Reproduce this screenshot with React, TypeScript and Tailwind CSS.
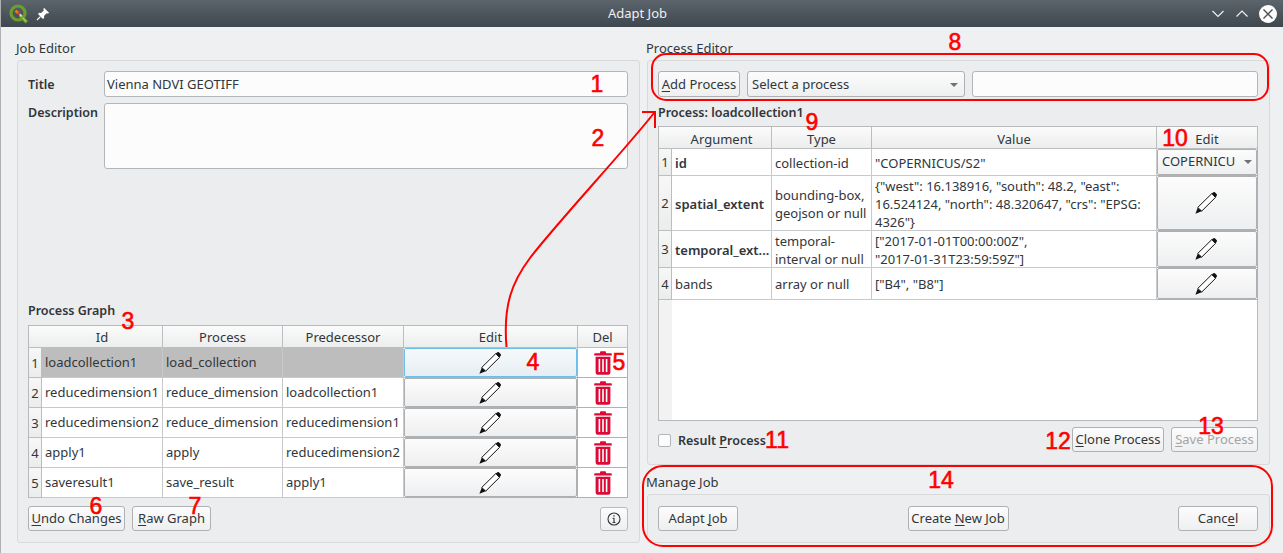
import type { ReactNode } from "react";

const FONT = "font-['Noto_Sans',sans-serif]";

const PencilIcon = () => (
  <svg width="24" height="24" viewBox="0 0 24 24" className="mr-[2px] shrink-0">
    <path d="M3.8 16.4 17.8 2.6 21.5 6.4 7.6 20.2Z" fill="#fff" stroke="#111" strokeWidth="1" strokeLinejoin="round" />
    <path d="M3.8 16.4 1.4 22.8 7.6 20.2 7 18.9 5.4 18.3Z" fill="#111" />
    <path d="M17.8 2.6 19.4 1.2Q20.2.8 20.9 1.3L22.8 3.2Q23.3 4 22.7 4.8L21.5 6.4Z" fill="#111" />
  </svg>
);

const TrashIcon = () => (
  <svg width="18" height="24" viewBox="0 0 18 24" className="shrink-0">
    <path d="M6 2.2V1.2Q6 .3 7 .3H11Q12 .3 12 1.2V2.2H17Q17.8 2.2 17.8 3V4.6H.2V3Q.2 2.2 1 2.2Z" fill="#dc0a36" />
    <path
      fillRule="evenodd"
      d="M1.6 5.8H16.4V21.6Q16.4 23.8 14.2 23.8H3.8Q1.6 23.8 1.6 21.6ZM4.6 8V21H6.2V8ZM8.2 8V21H9.8V8ZM11.8 8V21H13.4V8Z"
      fill="#dc0a36"
    />
  </svg>
);

const QgisLogo = () => (
  <svg width="20" height="20" viewBox="0 0 20 20">
    <circle cx="9" cy="9" r="7" fill="none" stroke="#6b9f2a" strokeWidth="3.2" />
    <path d="M11 11 17.8 18.4" stroke="#6b9f2a" strokeWidth="3.6" />
    <path d="M13.5 13.5 17 17.5" stroke="#a7c957" strokeWidth="1.4" />
    <path d="M6.8 7 10 9.6 12.6 12.6" stroke="#e8e8e0" strokeWidth="1.6" fill="none" />
    <path d="M6.6 6.8 9.4 9.2" stroke="#e8791e" strokeWidth="2.8" />
    <path d="M8.8 8.8 10.6 10.4" stroke="#e0342a" strokeWidth="2" />
  </svg>
);

const PinIcon = () => (
  <svg width="14" height="14" viewBox="0 0 14 14">
    <path d="M8 .8 13.2 6 11.8 6.6 10.6 6.2 8 9 8.2 11 7 12 2 7 3 5.8 5 6 7.8 3.4 7.4 2.2Z" fill="#fff" />
    <path d="M4.4 9.6 1 13" stroke="#fff" strokeWidth="1.2" />
  </svg>
);

const Btn = ({ children, className = "", disabled = false }: { children: ReactNode; className?: string; disabled?: boolean }) => (
  <button
    className={`h-[25px] shrink-0 rounded-[3px] border border-[#b0b1b2] bg-gradient-to-b from-[#fcfcfc] to-[#eeeff0] text-[13px] leading-none ${
      disabled ? "from-[#eff0f1] to-[#e6e7e8] text-[#a3a5a7]" : "text-[#31363b]"
    } ${className}`}
  >
    {children}
  </button>
);

const U = ({ children }: { children: ReactNode }) => <span className="underline underline-offset-2">{children}</span>;

const HeaderCell = ({ children, className = "" }: { children?: ReactNode; className?: string }) => (
  <div className={`flex items-center justify-center border-r border-b border-[#bcbdbe] bg-gradient-to-b from-[#fbfbfb] to-[#eceded] text-[13px] text-[#31363b] ${className}`}>
    {children}
  </div>
);

const RowNum = ({ n }: { n: number }) => (
  <div className="flex items-center justify-center border-r border-b border-[#bcbdbe] bg-gradient-to-b from-[#f7f7f7] to-[#ebecec] pt-[2px] text-[13px] text-[#31363b]">{n}</div>
);

const CellBtn = ({ children, active = false }: { children: ReactNode; active?: boolean }) => (
  <div className="border-r border-b border-[#b0b1b2]">
    <div
      className={`flex h-full items-center justify-center rounded-[2px] border bg-gradient-to-b ${
        active ? "border-[#6ebde8] from-[#f6f9fb] to-[#e6eef3]" : "border-[#aeafb0] from-[#fcfcfc] to-[#eeeff0]"
      }`}
    >
      {children}
    </div>
  </div>
);

const Cell = ({ children, className = "" }: { children?: ReactNode; className?: string }) => (
  <div className={`flex items-center overflow-hidden whitespace-nowrap border-r border-b border-[#c8c9ca] pl-[3px] text-[13px] leading-[18px] text-[#31363b] ${className}`}>
    {children}
  </div>
);

const graphRows = [
  ["loadcollection1", "load_collection", ""],
  ["reducedimension1", "reduce_dimension", "loadcollection1"],
  ["reducedimension2", "reduce_dimension", "reducedimension1"],
  ["apply1", "apply", "reducedimension2"],
  ["saveresult1", "save_result", "apply1"],
];

const ProcessGraphTable = () => (
  <div className="grid h-[173px] w-[600px] grid-cols-[13px_121px_120px_121px_174px_50px] grid-rows-[22px_repeat(5,30px)] border-t border-l border-[#b8b9ba] bg-white">
    <HeaderCell className="border-r-0" />
    <HeaderCell className="pt-[2px]">Id</HeaderCell>
    <HeaderCell className="pt-[2px]">Process</HeaderCell>
    <HeaderCell className="pt-[2px]">Predecessor</HeaderCell>
    <HeaderCell className="pt-[2px]">Edit</HeaderCell>
    <HeaderCell className="pt-[2px]">Del</HeaderCell>
    {graphRows.map((r, i) => (
      <div key={r[0]} className="contents">
        <RowNum n={i + 1} />
        {r.map((c, j) => (
          <Cell key={j} className={i === 0 ? "bg-[#bdbdbd] pb-px" : "pb-px"}>
            {c}
          </Cell>
        ))}
        <CellBtn active={i === 0}>
          <PencilIcon />
        </CellBtn>
        <div className="flex items-center justify-center border-r border-b border-[#b0b1b2]">
          <TrashIcon />
        </div>
      </div>
    ))}
  </div>
);

const argRows: { name: string; bold: boolean; type: ReactNode; value: ReactNode }[] = [
  { name: "id", bold: true, type: "collection-id", value: '"COPERNICUS/S2"' },
  {
    name: "spatial_extent",
    bold: true,
    type: (
      <>
        bounding-box,
        <br />
        geojson or null
      </>
    ),
    value: (
      <>
        {'{"west": 16.138916, "south": 48.2, "east":'}
        <br />
        {'16.524124, "north": 48.320647, "crs": "EPSG:'}
        <br />
        {'4326"}'}
      </>
    ),
  },
  {
    name: "temporal_ext...",
    bold: true,
    type: (
      <>
        temporal-
        <br />
        interval or null
      </>
    ),
    value: (
      <>
        {'["2017-01-01T00:00:00Z",'}
        <br />
        {'"2017-01-31T23:59:59Z"]'}
      </>
    ),
  },
  { name: "bands", bold: false, type: "array or null", value: '["B4", "B8"]' },
];

const ArgumentTable = () => (
  <div className="relative h-[295px] w-[600px] border border-[#b8b9ba] bg-white">
    <div className="grid w-[599px] grid-cols-[13px_100px_100px_285px_101px] grid-rows-[22px_27px_55px_37px_32px]">
      <HeaderCell className="border-r-0" />
      <HeaderCell className="pt-[4px]">Argument</HeaderCell>
      <HeaderCell className="pt-[4px]">Type</HeaderCell>
      <HeaderCell className="pt-[4px]">Value</HeaderCell>
      <HeaderCell className="pt-[4px]">Edit</HeaderCell>
      {argRows.map((r, i) => (
        <div key={r.name} className="contents">
          <RowNum n={i + 1} />
          <Cell className={r.bold ? "pt-px text-[12.5px] font-semibold" : "pt-px"}>{r.name}</Cell>
          <Cell className="pt-px">
            <div>{r.type}</div>
          </Cell>
          <Cell className="pt-px">
            <div>{r.value}</div>
          </Cell>
          {i === 0 ? (
            <CellBtn>
              <div className="flex w-full items-center justify-between px-[4px] text-[13px] text-[#31363b]">
                <span>COPERNICU</span>
                <span className="h-0 w-0 border-x-[4px] border-t-[4px] border-x-transparent border-t-[#6f7275]" />
              </div>
            </CellBtn>
          ) : (
            <CellBtn>
              <PencilIcon />
            </CellBtn>
          )}
        </div>
      ))}
    </div>
    <div className="h-[120px] w-[13px] bg-[#f2f2f3]" />
  </div>
);

const GroupBox = ({ children, className = "" }: { children: ReactNode; className?: string }) => (
  <div className={`ml-px flex flex-col rounded-[3px] border border-[#d8d9da] bg-[#ecedee] pr-[11px] pl-[10px] ${className}`}>{children}</div>
);

const TextField = ({ value = "" }: { value?: string }) => (
  <div className="flex h-[26px] flex-1 items-center rounded-[3px] border border-[#b4b5b6] bg-[#fcfcfc] px-[2px] pt-px text-[13px] text-[#31363b]">{value}</div>
);

type Mark = { t: string; x: number; y: number };
const marks: Mark[] = [
  { t: "1", x: 597, y: 84 },
  { t: "2", x: 598, y: 138 },
  { t: "3", x: 128, y: 321 },
  { t: "4", x: 533, y: 362 },
  { t: "5", x: 619, y: 362 },
  { t: "6", x: 96, y: 506 },
  { t: "7", x: 195, y: 506 },
  { t: "8", x: 955, y: 42 },
  { t: "9", x: 812, y: 122 },
  { t: "10", x: 1175, y: 138 },
  { t: "11", x: 777, y: 440 },
  { t: "12", x: 1058, y: 441 },
  { t: "13", x: 1211, y: 426 },
  { t: "14", x: 941, y: 480 },
];

const Annotations = () => (
  <>
    <svg width="1283" height="553" className="pointer-events-none absolute top-0 left-[-1px]">
      <rect x="652" y="54" width="616" height="46" rx="14" fill="none" stroke="#f00" strokeWidth="2" />
      <rect x="643" y="466" width="629" height="80" rx="20" fill="none" stroke="#f00" strokeWidth="2" />
      <path d="M506.5 347C503 305 512 282 530 258C555 225 625 150 654 113" fill="none" stroke="#f00" strokeWidth="2" />
      <path d="M642 112H655V128" fill="none" stroke="#f00" strokeWidth="2" />
    </svg>
    {marks.map((m) => (
      <span
        key={m.t}
        className="pointer-events-none absolute -translate-x-1/2 -translate-y-1/2 font-['Liberation_Sans',sans-serif] text-[23px] leading-none text-[#f00] [-webkit-text-stroke:0.6px_#f00]"
        style={{ left: m.x - 1, top: m.y }}
      >
        {m.t}
      </span>
    ))}
  </>
);

export default function App() {
  return (
    <div className={`relative flex h-[553px] w-[1283px] flex-col overflow-hidden border-l border-[#aeb0b2] bg-[#eff0f1] text-[13px] text-[#31363b] ${FONT}`}>
      <header className="relative flex h-[27px] shrink-0 items-center bg-gradient-to-b from-[#5c646c] to-[#3f474e] pl-[8px] text-white">
        <QgisLogo />
        <div className="ml-[7px]">
          <PinIcon />
        </div>
        <div className="flex-1 pr-[11px] pl-[25px] text-center text-[13px] text-[#eef0f1]">Adapt Job</div>
        <div className="flex items-center gap-[10px] pr-[6px]">
          <svg width="14" height="14" viewBox="0 0 14 14" fill="none" stroke="#eef0f1" strokeWidth="1.2">
            <path d="M1.5 4 7 9.5 12.5 4" />
          </svg>
          <svg width="14" height="14" viewBox="0 0 14 14" fill="none" stroke="#eef0f1" strokeWidth="1.2">
            <path d="M1.5 9.5 7 4 12.5 9.5" />
          </svg>
          <svg width="18" height="18" viewBox="0 0 18 18">
            <circle cx="9" cy="9" r="9" fill="#fcfcfc" />
            <path d="M4.5 4.5 13.5 13.5M13.5 4.5 4.5 13.5" stroke="#4a5158" strokeWidth="1.4" />
          </svg>
        </div>
      </header>

      <div className="flex flex-1 gap-[6px] pl-[15px]">
        <section className="flex w-[624px] flex-col">
          <div className="h-[33px] pt-[12px] leading-[18px]">Job Editor</div>
          <GroupBox className="h-[483px] pt-[10px]">
            <div className="flex items-center">
              <label className="w-[76px] pt-[2px] text-[12.5px] font-semibold">Title</label>
              <TextField value="Vienna NDVI GEOTIFF" />
            </div>
            <div className="mt-[6px] flex">
              <label className="w-[76px] pt-px text-[12.5px] leading-[18px] font-semibold">Description</label>
              <div className="h-[66px] flex-1 rounded-[3px] border border-[#b4b5b6] bg-[#fcfcfc]" />
            </div>
            <div className="flex-1" />
            <div className="mb-[5px] pt-px text-[12.5px] leading-[18px] font-semibold">Process Graph</div>
            <ProcessGraphTable />
            <div className="mt-[8px] mb-[11px] flex items-center gap-[7px]">
              <Btn className="w-[97px]">
                <U>U</U>ndo Changes
              </Btn>
              <Btn className="w-[79px]">
                <U>R</U>aw Graph
              </Btn>
              <div className="flex-1" />
              <button className="flex h-[24px] w-[28px] items-center justify-center rounded-[3px] border border-[#b8b9ba] bg-gradient-to-b from-[#fcfcfc] to-[#eeeff0]">
                <svg width="14" height="14" viewBox="0 0 14 14" fill="none" stroke="#31363b">
                  <circle cx="7" cy="7" r="6" strokeWidth="1.1" />
                  <path d="M7 6V10.5M5.6 6.2H7M5.6 10.5H8.4" strokeWidth="1.1" />
                  <path d="M7 3.2V4.6" strokeWidth="1.4" />
                </svg>
              </button>
            </div>
          </GroupBox>
        </section>

        <section className="flex w-[624px] flex-col">
          <div className="h-[33px] pt-[12px] leading-[18px]">Process Editor</div>
          <GroupBox className="h-[405px] pt-[10px]">
            <div className="flex items-center gap-[7px]">
              <Btn className="h-[26px] w-[82px]">
                <U>A</U>dd Process
              </Btn>
              <div className="flex h-[26px] w-[218px] shrink-0 items-center justify-between rounded-[3px] border border-[#b0b1b2] bg-gradient-to-b from-[#fcfcfc] to-[#eeeff0] pt-px pr-[6px] pl-[4px]">
                <span>Select a process</span>
                <span className="h-0 w-0 border-x-[4px] border-t-[4px] border-x-transparent border-t-[#6f7275]" />
              </div>
              <TextField />
            </div>
            <div className="mt-[6px] mb-[4px] pt-px text-[12.5px] leading-[18px] font-semibold">Process: loadcollection1</div>
            <ArgumentTable />
            <div className="mt-[6px] flex items-center">
              <span className="mt-[2px] h-[13px] w-[13px] rounded-[2px] border border-[#b4b5b6] bg-[#fcfcfc]" />
              <span className="ml-[7px] pt-[3px] text-[12.5px] font-semibold">
                Result <U>P</U>rocess
              </span>
              <div className="flex-1" />
              <Btn className="w-[92px]">
                <U>C</U>lone Process
              </Btn>
              <Btn disabled className="ml-[7px] w-[87px]">
                <U>S</U>ave Process
              </Btn>
            </div>
          </GroupBox>
          <div className="flex h-[29px] items-end pb-[3px] leading-[18px]">Manage Job</div>
          <GroupBox className="h-[49px] flex-row items-center justify-between">
            <Btn className="w-[80px]">
              Adapt <U>J</U>ob
            </Btn>
            <Btn className="w-[101px]">
              Create <U>N</U>ew Job
            </Btn>
            <Btn className="w-[80px]">
              Canc<U>e</U>l
            </Btn>
          </GroupBox>
        </section>
      </div>

      <Annotations />
    </div>
  );
}
